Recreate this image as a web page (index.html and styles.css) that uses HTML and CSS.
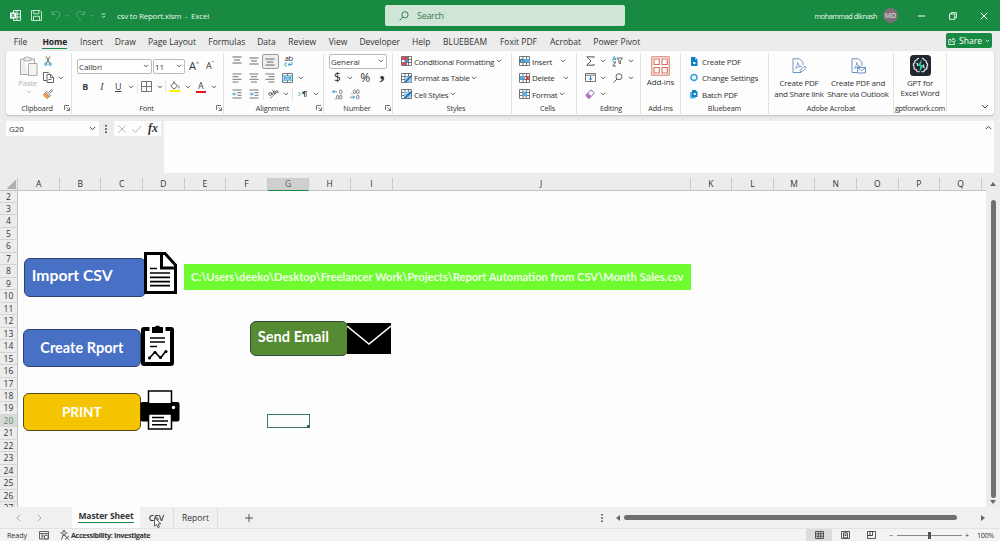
FILE: index.html
```html
<!doctype html>
<html lang="en">
<head>
	<meta charset="UTF-8">
	<title>csv to Report.xlsm - Excel</title>
	<link rel="stylesheet" href="styles.css">
</head>
<body>
	<!-- icons used more than once -->
	<svg class="defs">
		<symbol id="chev" viewBox="0 0 6 4"><path d="M1 .8 3 2.8 5 .8" fill="none" stroke="#444" stroke-width=".9"/></symbol>
		<symbol id="launch" viewBox="0 0 6 6"><path d="M.5 5V.5H5M2.3 2.3 5.3 5.3M5.5 2.5V5.5H2.5" fill="none" stroke="#555" stroke-width=".8"/></symbol>
		<symbol id="table" viewBox="0 0 11 10"><path d="M.5.5h10v9H.5zM.5 3.5h10M.5 6.5h10M4 .5v9M7.5.5v9" fill="#fff" stroke="#555" stroke-width=".8"/></symbol>
	</svg>

	<div id="frame">
		<header class="titlebar">
			<div class="quick">
				<svg width="11" height="11" viewBox="0 0 11 11"><path d="M3.5.5h7v10h-7zM7 .5v10M3.5 4h7M3.5 7h7" fill="none" stroke="#e5f5e9"/><path d="M0 2.5h6v6H0z" fill="#fff"/><path d="M1.7 3.8 4.3 7.2M4.3 3.8 1.7 7.2" stroke="#188a42"/></svg>
				<svg width="11" height="11" viewBox="0 0 11 11"><path d="M.5.5h8.5l1.5 1.5v8.5H.5zM2.8.5v3.3h5V.5M2.5 10.5V6.3h6v4.2" fill="none" stroke="#d8efdf" stroke-width=".9"/></svg>
				<svg width="20" height="11" viewBox="0 0 20 11"><path d="M1 1v3.5h3.5M1.2 4.2C3 .8 8.5.5 8.8 4 9 6.5 7 8 4.5 10M14.5 5l1.5 1.5 1.5-1.5" fill="none" stroke="#59ac75"/></svg>
				<svg width="20" height="11" viewBox="0 0 20 11"><path d="M8.5 1v3.5H5M8.3 4.2C6.5.8 1 .5.7 4 .5 6.5 2.5 8 5 10M14 5l1.5 1.5L17 5" fill="none" stroke="#59ac75"/></svg>
				<svg width="5" height="6" viewBox="0 0 5 6"><path d="M.5 1h4M1 3l1.5 1.5L4 3" fill="none" stroke="#d8efdf" stroke-width=".9"/></svg>
			</div>
			<span class="docname">csv to Report.xlsm&nbsp; -&nbsp; Excel</span>
			<div class="search">
				<svg width="10" height="10" viewBox="0 0 10 10"><circle cx="6" cy="3.8" r="3.1" fill="none" stroke="#3b7b54"/><path d="M3.8 6 .6 9.4" stroke="#3b7b54"/></svg>
				<span>Search</span>
			</div>
			<span class="user">mohammad diknash</span>
			<span class="avatar">MD</span>
			<div class="winbtns">
				<svg width="7" height="8" viewBox="0 0 7 8"><path d="M0 4h7" stroke="#fff"/></svg>
				<svg width="8" height="8" viewBox="0 0 8 8"><path d="M.5 2h5.3v5.3H.5zM2.2 2V.6h5.2v5H5.8" fill="none" stroke="#fff" stroke-width=".9"/></svg>
				<svg width="8" height="8" viewBox="0 0 8 8"><path d="M.8.8l6.4 6.4M7.2.8.8 7.2" stroke="#fff"/></svg>
			</div>
		</header>

		<div class="tabbar">
			<nav class="tabs">
				<a>File</a><a class="active">Home</a><a>Insert</a><a>Draw</a><a>Page Layout</a><a>Formulas</a><a>Data</a><a>Review</a><a>View</a><a>Developer</a><a>Help</a><a>BLUEBEAM</a><a>Foxit PDF</a><a>Acrobat</a><a>Power Pivot</a>
			</nav>
			<div class="share">
				<svg width="8" height="8" viewBox="0 0 8 8"><path d="M3 2.5H.8v5h5.7V5.5M2.5 5.5C2.7 3.5 3.7 2.7 5 2.7V1l2.5 2.5L5 5.5V4" fill="none" stroke="#fff" stroke-width=".8"/></svg>
				<span>Share</span>
				<svg width="5" height="4" viewBox="0 0 6 4"><path d="M1 .8 3 2.8 5 .8" fill="none" stroke="#fff"/></svg>
			</div>
		</div>

		<div class="ribbon">
			<section class="group clipboard">
				<div class="body">
					<div class="paste">
						<svg width="20" height="21" viewBox="0 0 20 21"><path d="M5 3H1.5v15.5H9M12 3h3.5v4M5 1.8h2C7.2.5 9.8.5 10 1.8h2v3H5z" fill="#eee" stroke="#aaa"/><path d="M9.5 7.5h8.5v12H9.5z" fill="#f4f4f4" stroke="#aaa"/></svg>
						<span>Paste</span>
						<svg class="faint" width="6" height="4"><use href="#chev"/></svg>
					</div>
					<div class="lines">
						<div class="line"><span class="b"><svg width="8" height="10" viewBox="0 0 8 10"><path d="M2 .5 5.5 7M6 .5 2.5 7" stroke="#555" stroke-width=".9"/><circle cx="1.8" cy="8.2" r="1.2" fill="none" stroke="#2e8fc0"/><circle cx="6.2" cy="8.2" r="1.2" fill="none" stroke="#2e8fc0"/></svg></span></div>
						<div class="line"><span class="b"><svg width="11" height="11" viewBox="0 0 11 11"><path d="M4 8.5H.5v-8h5l1 1" fill="none" stroke="#555" stroke-width=".9"/><path d="M4 2.5h3.8l2.7 2.7v5.3H4zM7.5 2.5v3h3M5.5 7.5h3" fill="#fff" stroke="#555" stroke-width=".9"/></svg></span><span class="c"><svg><use href="#chev"/></svg></span></div>
						<div class="line"><span class="b"><svg width="10" height="10" viewBox="0 0 10 10"><path d="M6 3.2 8.5.7l1 1L7 4.2" fill="#fff" stroke="#555" stroke-width=".8"/><path d="M3.8 2.5 7.6 6.3 6.4 7.5 2.5 3.7z" fill="#fff" stroke="#555" stroke-width=".8"/><path d="M2.4 3.8 6.3 7.6 4.5 9.5C3 9 1.5 7.5.5 5.5z" fill="#f1a24a" stroke="#b8651c" stroke-width=".6"/></svg></span></div>
					</div>
				</div>
				<footer><span>Clipboard</span><svg class="launch"><use href="#launch"/></svg></footer>
			</section>

			<section class="group font">
				<div class="body lines">
					<div class="line">
						<span class="combo fontname">Calibri<svg class="ch"><use href="#chev"/></svg></span>
						<span class="combo fontsize">11<svg class="ch"><use href="#chev"/></svg></span>
						<span class="grow big">A<sup>^</sup></span>
						<span class="grow">A<sup>ˇ</sup></span>
					</div>
					<div class="line second">
						<span class="b"><b>B</b></span><span class="b"><i>I</i></span><span class="b"><u>U</u></span><span class="c"><svg><use href="#chev"/></svg></span>
						<span class="sep"></span>
						<span class="b"><svg width="11" height="11" viewBox="0 0 11 11"><path d="M.5.5h10v10H.5zM.5 5.5h10M5.5.5v10" fill="none" stroke="#666" stroke-width=".9"/></svg></span><span class="c"><svg><use href="#chev"/></svg></span>
						<span class="sep"></span>
						<span class="b"><svg width="12" height="11" viewBox="0 0 12 11"><path d="M5 1.5 8.5 5 5 8 1.8 5z" fill="#fff" stroke="#555" stroke-width=".9"/><path d="M5 0v3" stroke="#555" stroke-width=".8"/><path d="M9 4.5q1.6 1 1 3" fill="none" stroke="#2e8fc0"/><path d="M.5 9h11v2H.5z" fill="#fff200"/></svg></span><span class="c"><svg><use href="#chev"/></svg></span>
						<span class="b fontcolor">A</span><span class="c"><svg><use href="#chev"/></svg></span>
					</div>
				</div>
				<footer><span>Font</span><svg class="launch"><use href="#launch"/></svg></footer>
			</section>

			<section class="group align">
				<div class="body lines">
					<div class="line">
						<span class="b"><svg width="10" height="10" viewBox="0 0 10 10"><path d="M.5 1h9M2 4h6M.5 7h9" stroke="#666"/></svg></span>
						<span class="b"><svg width="10" height="10" viewBox="0 0 10 10"><path d="M.5 2h9M2 5h6M.5 8h9" stroke="#666"/></svg></span>
						<span class="b on"><svg width="10" height="10" viewBox="0 0 10 10"><path d="M.5 3h9M2 6h6M.5 9h9" stroke="#666"/></svg></span>
						<span class="b wrap"><span>ab</span><svg width="9" height="5" viewBox="0 0 9 5"><path d="M3 .8Q.8.8.8 2.5T3 4.2M8 0v2.5H4.5M6 .8 4.3 2.5 6 4.2" fill="none" stroke="#2e8fc0" stroke-width=".9"/></svg></span>
					</div>
					<div class="line">
						<span class="b"><svg width="10" height="10" viewBox="0 0 10 10"><path d="M.5 1h9M.5 3.7h6M.5 6.3h9M.5 9h6" stroke="#666" stroke-width=".9"/></svg></span>
						<span class="b"><svg width="10" height="10" viewBox="0 0 10 10"><path d="M.5 1h9M2 3.7h6M.5 6.3h9M2 9h6" stroke="#666" stroke-width=".9"/></svg></span>
						<span class="b"><svg width="10" height="10" viewBox="0 0 10 10"><path d="M.5 1h9M3.5 3.7h6M.5 6.3h9M3.5 9h6" stroke="#666" stroke-width=".9"/></svg></span>
						<span class="b"><svg width="11" height="10" viewBox="0 0 11 10"><path d="M.5.5h10v9H.5zM5.5.5v9" fill="#fff" stroke="#555" stroke-width=".8"/><path d="M.5 2.8h10v4.4H.5z" fill="#bfe3f5" stroke="#2e8fc0" stroke-width=".8"/><path d="M2 5h7M3.5 3.8 2.2 5l1.3 1.2M7.5 3.8 8.8 5 7.5 6.2" fill="none" stroke="#1c6fa5" stroke-width=".7"/></svg></span><span class="c"><svg><use href="#chev"/></svg></span>
					</div>
					<div class="line">
						<span class="b"><svg width="10" height="10" viewBox="0 0 10 10"><path d="M.5 1h9M5.5 3.7h4M5.5 6.3h4M.5 9h9" stroke="#666" stroke-width=".9"/><path d="M4.5 5H.8M2.3 3.5.8 5l1.5 1.5" fill="none" stroke="#2e8fc0" stroke-width=".9"/></svg></span>
						<span class="b"><svg width="10" height="10" viewBox="0 0 10 10"><path d="M.5 1h9M5.5 3.7h4M5.5 6.3h4M.5 9h9" stroke="#666" stroke-width=".9"/><path d="M.5 5h3.7M2.7 3.5 4.2 5 2.7 6.5" fill="none" stroke="#2e8fc0" stroke-width=".9"/></svg></span>
						<span class="sep thin"></span>
						<span class="b"><svg width="11" height="10" viewBox="0 0 11 10"><path d="M2 9.5 10 2M7.5 2H10v2.5" fill="none" stroke="#777" stroke-width=".9"/><circle cx="2.2" cy="5" r="1.4" fill="none" stroke="#555" stroke-width=".9"/><path d="M3.6 3.5 4.6 6M4.5 1 7 5" stroke="#555" stroke-width=".9"/><circle cx="6.5" cy="3.4" r="1.2" fill="none" stroke="#555" stroke-width=".9"/></svg></span><span class="c"><svg><use href="#chev"/></svg></span>
						<span class="sep"></span>
						<span class="b rtl"><svg width="9" height="8" viewBox="0 0 9 8"><path d="M.5 2 2.5 4 .5 6" fill="none" stroke="#2a9a8a" stroke-width=".9"/><path d="M6.5 7V1.5M8.2 7V1.5M9 1.5H6" fill="none" stroke="#444" stroke-width=".8"/><circle cx="5.5" cy="2.8" r="1.4" fill="#444"/></svg></span><span class="c"><svg><use href="#chev"/></svg></span>
					</div>
				</div>
				<footer><span>Alignment</span><svg class="launch"><use href="#launch"/></svg></footer>
			</section>

			<section class="group number">
				<div class="body lines">
					<div class="line"><span class="combo format">General<svg class="ch"><use href="#chev"/></svg></span></div>
					<div class="line signs"><span class="b">$</span><span class="c"><svg><use href="#chev"/></svg></span><span class="b pct">%</span><span class="b comma">,</span></div>
					<div class="line decs">
						<span class="b"><svg width="11" height="11" viewBox="0 0 11 11"><path d="M5 2.7H.6M2.200 1.100.6 2.700l1.600 1.600" fill="none" stroke="#2e8fc0" stroke-width=".9"/><g fill="none" stroke="#666" stroke-width=".8"><ellipse cx="8.800" cy="2.700" rx="1.300" ry="1.900"/><ellipse cx="5.600" cy="8.200" rx="1.300" ry="1.900"/><ellipse cx="8.800" cy="8.200" rx="1.300" ry="1.900"/><path d="M2.500 10.200h1"/></g></svg></span>
						<span class="b"><svg width="11" height="11" viewBox="0 0 11 11"><path d="M1 8.200h4.600M4 6.600l1.600 1.600L4 9.800" fill="none" stroke="#2e8fc0" stroke-width=".9"/><g fill="none" stroke="#666" stroke-width=".8"><ellipse cx="5.600" cy="2.700" rx="1.300" ry="1.900"/><ellipse cx="8.800" cy="2.700" rx="1.300" ry="1.900"/><ellipse cx="8.800" cy="8.200" rx="1.300" ry="1.900"/><path d="M2.500 4.700h1"/></g></svg></span>
					</div>
				</div>
				<footer><span>Number</span><svg class="launch"><use href="#launch"/></svg></footer>
			</section>

			<section class="group styles">
				<div class="body lines">
					<div class="line"><svg class="ti"><use href="#table"/><path d="M1 1h6v2.5H1zM1 6.5h5V9H1z" fill="#e2475d"/><path d="M4 3.5h3v3H4z" fill="#4a90d0"/></svg><span>Conditional Formatting</span><svg class="ch"><use href="#chev"/></svg></div>
					<div class="line"><svg class="ti"><use href="#table"/><path d="M4 3.5h6.5v6H4z" fill="#9ccbed"/><path d="M4 9.5 10 3" stroke="#1f6fb0" stroke-width="1.8"/></svg><span>Format as Table</span><svg class="ch"><use href="#chev"/></svg></div>
					<div class="line"><svg class="ti"><use href="#table"/><path d="M3 2.5h7v6H3z" fill="#9ccbed"/><path d="M3.5 9.5 10 3" stroke="#1f6fb0" stroke-width="1.8"/></svg><span>Cell Styles</span><svg class="ch"><use href="#chev"/></svg></div>
				</div>
				<footer><span>Styles</span></footer>
			</section>

			<section class="group cells">
				<div class="body lines">
					<div class="line"><svg class="ti"><use href="#table"/><path d="M4 3h7v3.5H4z" fill="#56aede"/><path d="M5 4.8H.5M2.5 3 .7 4.8l1.8 1.8" fill="none" stroke="#1f6fb0"/></svg><span>Insert</span><svg class="ch far"><use href="#chev"/></svg></div>
					<div class="line"><svg class="ti"><use href="#table"/><path d="M1 3h5v3.5H1z" fill="#56aede"/><path d="M6.5 3 10.5 7M10.5 3l-4 4" stroke="#d83b3b" stroke-width="1.1"/></svg><span>Delete</span><svg class="ch far"><use href="#chev"/></svg></div>
					<div class="line"><svg class="ti"><use href="#table"/><path d="M3.5 2.5h4.5v5H3.5z" fill="#56aede"/></svg><span>Format</span><svg class="ch"><use href="#chev"/></svg></div>
				</div>
				<footer><span>Cells</span></footer>
			</section>

			<section class="group editing">
				<div class="body lines">
					<div class="line"><span class="b"><svg width="9" height="10" viewBox="0 0 9 10"><path d="M8 2V.8H.8L5 5 .8 9.2H8V8" fill="none" stroke="#555"/></svg></span><span class="c"><svg><use href="#chev"/></svg></span><span class="b az"><svg width="11" height="11" viewBox="0 0 11 11"><path d="M.5 4.5 2.2.5 4 4.5M1 3.3h2.5" fill="none" stroke="#2e8fc0" stroke-width=".9"/><path d="M.8 6h3L.8 10h3.2M5 2h5.5L8.3 4.7V8L7 7V4.7z" fill="none" stroke="#555" stroke-width=".9"/></svg></span><span class="c"><svg><use href="#chev"/></svg></span></div>
					<div class="line"><span class="b"><svg width="11" height="9" viewBox="0 0 11 9"><path d="M.5.5h10v8H.5zM.5 2.2h10" fill="none" stroke="#666" stroke-width=".9"/><path d="M5.5 3v4M3.8 5.4 5.5 7l1.7-1.6" fill="none" stroke="#1f6fb0" stroke-width=".9"/></svg></span><span class="c"><svg><use href="#chev"/></svg></span><span class="b az"><svg width="10" height="10" viewBox="0 0 10 10"><circle cx="6" cy="3.7" r="3" fill="none" stroke="#555" stroke-width=".9"/><path d="M4 6 .6 9.5" stroke="#555"/></svg></span><span class="c"><svg><use href="#chev"/></svg></span></div>
					<div class="line"><span class="b"><svg width="10" height="10" viewBox="0 0 10 10"><path d="M.8 6 6 .8 9.3 4 4.5 9.2H3z" fill="#fff" stroke="#8c4fa5" stroke-width=".9"/><path d="M.8 6 3 3.8 6.5 7.2 4.5 9.2H3z" fill="#b673cc"/></svg></span><span class="c"><svg><use href="#chev"/></svg></span></div>
				</div>
				<footer><span>Editing</span></footer>
			</section>

			<section class="group addins">
				<div class="body tall">
					<svg width="19" height="20" viewBox="0 0 19 20"><path d="M.8.8h17.400v18.400H.8z" fill="#fff" stroke="#d6705c"/><path d="M3 3h5.3v5.5H3zM11 3h5.3v5.5H11zM3 11.5h5.3V17H3zM11 11.5h5.3V17H11z" fill="#fff" stroke="#d6705c" stroke-width="1.1"/></svg>
					<p>Add-ins</p>
				</div>
				<footer><span>Add-ins</span></footer>
			</section>

			<section class="group bluebeam">
				<div class="body lines">
					<div class="line"><svg width="8" height="9" viewBox="0 0 8 9"><path d="M1 0h4l2.5 2.5V9H1z" fill="#0f80c0"/><path d="M5 0v2.5h2.5z" fill="#8cc9ea"/><path d="M3 7V5h2.5v2z" fill="#cfeafa"/></svg><span>Create PDF</span></div>
					<div class="line"><svg width="8" height="9" viewBox="0 0 8 9"><circle cx="4" cy="4.5" r="2.9" fill="#eaf7fe" stroke="#2799d2" stroke-width="1.1"/><circle cx="4" cy="4.5" r="3.6" fill="none" stroke="#2799d2" stroke-width=".7" stroke-dasharray="1 1"/></svg><span>Change Settings</span></div>
					<div class="line"><svg width="8" height="9" viewBox="0 0 8 9"><path d="M0 2v6.500h5.500V2z" fill="#57b2de"/><path d="M2 0h3.500l2 2v5H2z" fill="#0f80c0"/><path d="M3.500 3h2.500v2H3.500z" fill="#cfeafa"/></svg><span>Batch PDF</span></div>
				</div>
				<footer><span>Bluebeam</span></footer>
			</section>

			<section class="group acrobat">
				<div class="body">
					<div class="tall link">
						<svg width="15" height="16" viewBox="0 0 15 16"><path d="M9 14.5H1V.8h6.500L11 4.300V7" fill="none" stroke="#6f93c0"/><path d="M3.500 10.500Q6 7 5.700 4.500 6 8 9.500 8.500 6 8.300 3.500 10.500z" fill="none" stroke="#6f93c0" stroke-width=".8"/><path d="M8 12.500l4-4q2-.7 2 1.300l-4 4q-2 .7-2-1.300z" fill="#fff" stroke="#6f93c0"/></svg>
						<p>Create PDF<br>and Share link</p>
					</div>
					<div class="tall mail">
						<svg width="15" height="16" viewBox="0 0 15 16"><path d="M6 14.500H1V.8h6.500L11 4.300V8" fill="none" stroke="#6f93c0"/><path d="M3.500 10.500Q6 7 5.700 4.500 6 8 9.500 8.500 6 8.300 3.500 10.500z" fill="none" stroke="#6f93c0" stroke-width=".8"/><path d="M6.500 9.500h8v5.500h-8zM6.500 9.700l4 3 4-3" fill="#fff" stroke="#5b86bd" stroke-width=".9"/></svg>
						<p>Create PDF and<br>Share via Outlook</p>
					</div>
				</div>
				<footer><span>Adobe Acrobat</span></footer>
			</section>

			<section class="group gpt">
				<div class="body tall">
					<svg width="21" height="21" viewBox="0 0 21 21"><rect width="21" height="21" rx="3.5" fill="#22262f"/><path d="M9 3.500Q7.500 3 6.800 5 4.500 5 4.700 7.500 2.500 9 4 11.500 3.500 14 6 14.500 7 17.500 9.500 16.500M12 3.500Q13.500 3 14.200 5 16.500 5 16.300 7.500 18.500 9 17 11.500 17.500 14 15 14.500 14 17.500 11.500 16.500M6.500 8Q8 8.500 7.500 11M14.500 13Q13 12 13.700 9.500" fill="none" stroke="#e6e9ec" stroke-width="1.2"/><path d="M11.800 4 7.500 11h2.700L9.300 17.500 13.800 10h-3z" fill="#22d3a0"/></svg>
					<p>GPT for<br>Excel Word</p>
				</div>
				<footer><span>gptforwork.com</span></footer>
			</section>
			<svg class="collapse" width="8" height="5" viewBox="0 0 8 5"><path d="M1 1l3 3 3-3" fill="none" stroke="#444"/></svg>
		</div>

		<div class="formulabar">
			<div class="namebox">G20<svg width="7" height="5" viewBox="0 0 7 5"><path d="M.8 1l2.7 2.7L6.2 1" fill="none" stroke="#444"/></svg></div>
			<svg class="dots" width="2" height="8" viewBox="0 0 2 8"><path d="M0 0h2v1.600H0zM0 3.200h2v1.600H0zM0 6.400h2V8H0z" fill="#555"/></svg>
			<div class="fx">
				<svg width="8" height="8" viewBox="0 0 8 8"><path d="M.5.5l7 7M7.500.5l-7 7" stroke="#b5b5b5"/></svg>
				<svg width="10" height="8" viewBox="0 0 10 8"><path d="M.5 4.500 3.500 7.300 9.500.7" fill="none" stroke="#b5b5b5"/></svg>
				<i>fx</i>
			</div>
			<div class="input"><svg width="7" height="5" viewBox="0 0 7 5"><path d="M.8 4l2.700-2.700L6.200 4" fill="none" stroke="#444"/></svg></div>
		</div>

		<div class="workbook">
			<div class="sheet">
				<div class="cols">
					<span class="corner"></span><span>A</span><span>B</span><span>C</span><span>D</span><span>E</span><span>F</span><span class="sel">G</span><span>H</span><span>I</span><span>J</span><span>K</span><span>L</span><span>M</span><span>N</span><span>O</span><span>P</span><span>Q</span>
				</div>
				<div class="main">
					<div class="rows">
						<span>2</span><span>3</span><span>4</span><span>5</span><span>6</span><span>7</span><span>8</span><span>9</span><span>10</span><span>11</span><span>12</span><span>13</span><span>14</span><span>15</span><span>16</span><span>17</span><span>18</span><span>19</span><span class="sel">20</span><span>21</span><span>22</span><span>23</span><span>24</span><span>25</span><span>26</span><span>27</span>
					</div>
					<!-- buttons and pictures float over the cells -->
					<div class="canvas">
						<div class="shape import"><span>Import CSV</span></div>
						<svg class="pic doc" width="33" height="42" viewBox="0 0 33 42"><path d="M1.500 1.500h19.500L31.500 13v27.500h-30z" fill="#fff" stroke="#000" stroke-width="3"/><path d="M17.500 1v15H32" fill="none" stroke="#000" stroke-width="3"/><path d="M6 16.500h7M6 21h20M6 25.300h20M6 29.600h20M6 33.700h20" stroke="#000" stroke-width="1.700"/></svg>
						<div class="path"><span>C:\Users\deeko\Desktop\Freelancer Work\Projects\Report Automation from CSV\Month Sales.csv</span></div>

						<div class="shape create"><span>Create Rport</span></div>
						<svg class="pic clip" width="33" height="41" viewBox="0 0 33 41"><rect x="2" y="4" width="29" height="35" rx="1" fill="#fff" stroke="#000" stroke-width="4"/><path d="M8.500 1h16v9h-16z" fill="#fff"/><path d="M11 2h2.500Q16.500-1 19.500 2H22v6H11z" fill="#000"/><path d="M9 13h15M9 17h15M9 21.500h7" stroke="#000" stroke-width="1.600"/><path d="M8.500 33 14 27l5.500 6L25 26" fill="none" stroke="#000" stroke-width="1.600"/><g><circle cx="8.500" cy="33" r="1.500"/><circle cx="14" cy="27.500" r="1.500"/><circle cx="19.500" cy="32.500" r="1.500"/><circle cx="25" cy="26.500" r="1.500"/></g></svg>

						<div class="shape send"><span>Send Email</span></div>
						<svg class="pic envelope" width="44" height="31" viewBox="0 0 44 31"><path d="M0 0h44v31H0z"/><path d="M0 3 22 21 44 3" fill="none" stroke="#fff" stroke-width="1.600"/></svg>

						<div class="shape print"><span>PRINT</span></div>
						<svg class="pic printer" width="40" height="40" viewBox="0 0 40 40"><path d="M8.500 1h23v14h-23z" fill="#fff" stroke="#000" stroke-width="1.500"/><path d="M2.500 12H8v1h24v-1h5.500q2 0 2 2v15.500q0 2-2 2h-35q-2 0-2-2V14q0-2 2-2z"/><circle cx="33.500" cy="17.500" r="1.700" fill="#fff"/><path d="M8.500 24h23v15h-23z" fill="#fff" stroke="#000" stroke-width="1.500"/><path d="M12 27.500h12M12 31h16M12 34.700h15" stroke="#000" stroke-width="1.500"/></svg>
						<div class="cursorcell"></div>
					</div>
				</div>
			</div>
			<div class="vscroll"><i class="up"></i><b></b><i class="down"></i></div>
		</div>

		<div class="sheettabs">
			<svg width="5" height="8" viewBox="0 0 5 8"><path d="M4.200.8.9 4l3.300 3.200" fill="none" stroke="#aaa"/></svg>
			<svg width="5" height="8" viewBox="0 0 5 8"><path d="M.8.8 4.100 4 .8 7.200" fill="none" stroke="#aaa"/></svg>
			<span class="tab active"><b>Master Sheet</b></span>
			<span class="tab csv">CSV
				<svg class="pointer" width="8" height="12" viewBox="0 0 8 12"><path d="M.6.8v8.400l2-1.800 1.300 3.200 1.500-.6-1.300-3.100h2.700z" fill="#fff" stroke="#333" stroke-width=".8"/></svg>
			</span>
			<span class="tab rep">Report</span>
			<svg class="plus" width="8" height="8" viewBox="0 0 8 8"><path d="M4 0v8M0 4h8" stroke="#555"/></svg>
			<svg class="dots" width="2" height="8" viewBox="0 0 2 8"><path d="M0 0h2v1.600H0zM0 3.200h2v1.600H0zM0 6.400h2V8H0z" fill="#666"/></svg>
			<div class="hscroll"><i class="left"></i><b></b><i class="right"></i></div>
		</div>

		<div class="status">
			<span class="ready">Ready</span>
			<svg class="macro" width="10" height="9" viewBox="0 0 10 9"><path d="M.5.500h9v7.500h-9zM.5 2.500h9M3 2.500V8M3 5h3" fill="none" stroke="#555" stroke-width=".9"/><circle cx="7.300" cy="6" r="2" fill="#fff" stroke="#444" stroke-width=".9"/></svg>
			<svg class="acc" width="10" height="10" viewBox="0 0 10 10"><circle cx="4" cy="1.300" r="1" fill="none" stroke="#444" stroke-width=".8"/><path d="M.5 2.500 3 3.500v2L1.500 9.500M7.500 2.500 5 3.500v2M3 5.500h2M5 5.800 9 9.500M9 5.800 5 9.500" fill="none" stroke="#444" stroke-width=".9"/></svg>
			<b>Accessibility: Investigate</b>
			<div class="views">
				<span class="current"><svg width="9" height="8" viewBox="0 0 9 8"><path d="M.5.5h8v7h-8zM.5 2.800h8M.5 5.200h8M3.200.5v7M5.800.5v7" fill="none" stroke="#444" stroke-width=".9"/></svg></span>
				<span><svg width="9" height="8" viewBox="0 0 9 8"><path d="M.5.5h8v7h-8zM2.500 1.800h4v5h-4zM3.500 3.200h2M3.500 4.500h2" fill="none" stroke="#444" stroke-width=".9"/></svg></span>
				<span><svg width="9" height="8" viewBox="0 0 9 8"><path d="M.5.5h8v7h-8zM3 .5v4H.5M5.500.5v4h-2.500M.5 4.500h5" fill="none" stroke="#444" stroke-width=".9"/></svg></span>
			</div>
			<div class="zoom"><span>−</span><div class="track"><b></b></div><span>+</span></div>
			<span class="percent">100%</span>
		</div>
	</div>
</body>
</html>
```
FILE: styles.css
```css
* {
	box-sizing: border-box;
}

body {
	margin: 0;
	font: 8px "Open Sans", "Noto Sans", sans-serif;
	color: #333;
	background: #ececec;
}

svg {
	display: block;
	flex: none;
}

.defs {
	position: absolute;
	width: 0;
	height: 0;
}

#frame {
	width: 1000px;
	height: 541px;
	display: flex;
	flex-direction: column;
	overflow: hidden;
	white-space: nowrap;
}

/* title bar */
.titlebar {
	height: 31px;
	flex: none;
	background: #188a42;
	color: #e8f5ec;
	display: flex;
	align-items: center;
}
.quick {
	width: 117px;
	padding-left: 10px;
	display: flex;
	align-items: center;
	gap: 9.5px;
}
.quick svg:nth-child(4) { margin-left: -5px; }
.quick svg:nth-child(5) { margin-left: -4px; }
.docname {
	width: 268px;
	letter-spacing: -.22px;
}
.search {
	width: 240px;
	height: 21px;
	padding-left: 14px;
	display: flex;
	align-items: center;
	gap: 8px;
	background: #cfe6d7;
	border-radius: 2px;
	color: #3b7b54;
	font-size: 9px;
	letter-spacing: -.3px;
}
.user {
	width: 258px;
	padding-right: 6px;
	text-align: right;
	font-size: 7.3px;
	letter-spacing: -.48px;
}
.avatar {
	width: 15px;
	height: 15px;
	border-radius: 50%;
	background: #7d7074;
	font-size: 7px;
	line-height: 15px;
	text-align: center;
}
.winbtns {
	display: flex;
	align-items: center;
	gap: 23.5px;
	margin-left: 20px;
}

/* ribbon tabs */
.tabbar {
	height: 20px;
	flex: none;
	display: flex;
	justify-content: space-between;
	padding: 0 8px 0 5.5px;
}
.tabs {
	display: grid;
	grid-template-columns: 30px 38.5px 35px 32.5px 61px 48.5px 31px 40.5px 31px 52.5px 30.5px 57px 50px 44px 58.5px;
	justify-items: center;
	font-size: 8.5px;
	line-height: 21px;
}
.tabs a.active {
	height: 18px;
	font-weight: bold;
	color: #222;
	letter-spacing: -.15px;
	border-bottom: 1.5px solid #188a42;
}
.share {
	width: 46px;
	height: 15px;
	margin-top: 2px;
	display: flex;
	align-items: center;
	justify-content: center;
	gap: 3px;
	background: #188a42;
	border-radius: 2px;
	color: #fff;
	font-size: 8.5px;
}

/* ribbon */
.ribbon {
	height: 64px;
	flex: none;
	margin: 0 6px;
	display: flex;
	background: #fdfdfd;
	border-radius: 4px;
	box-shadow: 0 1px 2px #bbb;
	letter-spacing: -.26px;
}
.group {
	height: 61px;
	margin-top: 2px;
	flex: none;
	display: flex;
	flex-direction: column;
	border-right: 1px solid #e2e2e2;
}
.group .body {
	height: 49.5px;
	flex: none;
	display: flex;
}
.group .lines {
	display: flex;
	flex-direction: column;
}
.group footer {
	display: flex;
	align-items: center;
	justify-content: center;
	height: 13px;
	font-size: 7.3px;
	letter-spacing: -.15px;
}
.group footer span {
	flex: 1;
	text-align: center;
}
.launch {
	width: 6px;
	height: 6px;
	margin-right: 1px;
}
.line {
	height: 16.5px;
	display: flex;
	align-items: center;
}
.b {
	width: 16.5px;
	height: 15px;
	flex: none;
	display: flex;
	align-items: center;
	justify-content: center;
}
.c {
	width: 9px;
	flex: none;
	display: flex;
	justify-content: center;
}
.c svg, .ch {
	width: 6px;
	height: 4px;
}
.sep {
	width: 1px;
	height: 12px;
	margin: 0 1px;
	background: #e4e4e4;
}
.tall {
	flex-direction: column;
	align-items: center;
	text-align: center;
}
.tall p {
	margin: 0;
	line-height: 10.5px;
}
.combo {
	height: 15px;
	padding: 0 2px 0 1px;
	display: flex;
	align-items: center;
	justify-content: space-between;
	border: 1px solid #bbb;
	border-radius: 2px;
	background: #fff;
	letter-spacing: -.1px;
}

.clipboard { width: 66px; padding-left: 11px; }
.clipboard footer { margin-left: -7px; }
.paste {
	width: 24px;
	padding-top: 3px;
	display: flex;
	flex-direction: column;
	align-items: center;
	color: #b5b5b5;
}
.paste span { line-height: 11px; margin: 0 0 2px -3px; }
.faint { opacity: .4; }
.clipboard .lines { margin-left: -1px; }
.clipboard .b { width: 16px; }

.font { width: 152px; padding-left: 5px; }
.fontname { width: 75px; margin-right: 1px; }
.fontsize { width: 32px; margin-right: 4px; }
.font .lines { gap: 2px; padding-top: 5px; }
.grow { width: 17px; font-size: 9px; line-height: 12px; }
.grow.big { font-size: 11px; }
.grow sup { font-size: 6px; line-height: 0; }
.second { height: 20px; }
.second .b { font-size: 9px; color: #444; }
.second .b i { font-family: "Liberation Serif", serif; font-size: 10px; }
.fontcolor { height: 12px; line-height: 9px; position: relative; align-items: flex-start; }
.fontcolor::after {
	content: "";
	position: absolute;
	left: 3px;
	bottom: 0;
	width: 10px;
	height: 2px;
	background: #e81123;
}

.align { width: 100px; padding-left: 5px; }
.on { background: #eee; border: 1px solid #999; border-radius: 2px; }
.wrap { flex-direction: column; line-height: 7px; font-size: 7.5px; margin-left: 2px; }
.align .line:nth-child(2) .b:nth-child(4) { margin-left: 1px; }
.align .thin { margin: 0 1px; }
.rtl { margin-left: 1px; }

.number { width: 69px; padding-left: 5px; }
.format { width: 58px; }
.signs .b { font-size: 12px; }
.signs .pct { width: 21px; font-size: 12px; }
.signs .comma { width: 13px; font: bold 21px "Liberation Serif", serif; padding-bottom: 11px; }
.decs .b { margin-right: 1px; }

.styles { width: 119px; padding-left: 8px; }
.ti { width: 11px; height: 10px; margin-right: 2px; }
.line .ch { margin-left: 1.5px; }
.line .combo .ch { margin-left: 0; }
.cells { width: 65px; padding-left: 7px; }
.cells .line .far { margin-left: 8px; }
.editing { width: 64px; padding-left: 5px; }
.editing .az { margin-left: 2px; }
.addins { width: 40px; }
.addins .body { padding-top: 3px; letter-spacing: -.1px; }
.addins p { margin-top: 1px; }
.bluebeam { width: 88px; padding-left: 9px; }
.bluebeam .line span { margin-left: 4px; }
.bluebeam footer { margin-left: -9px; }
.acrobat { width: 125px; }
.acrobat .tall { display: flex; padding-top: 5px; }
.acrobat p { margin-top: 4px; }
.link { width: 60px; }
.mail { width: 58px; }
.gpt { width: 53px; border-right-color: #e8e8e8; }
.gpt .body { padding-top: 1.5px; }
.gpt p { margin-top: 2px; }
.gpt footer { letter-spacing: -.3px; }
.collapse { margin: 53px 0 0 34px; }

/* formula bar */
.formulabar {
	height: 63px;
	flex: none;
	padding: 6px 6px 0;
	display: flex;
}
.namebox {
	width: 93px;
	height: 15px;
	padding: 0 3px;
	display: flex;
	align-items: center;
	justify-content: space-between;
	background: #fdfdfd;
	letter-spacing: -.1px;
}
.formulabar .dots { margin: 4px 7px 0 6px; }
.fx {
	width: 47px;
	height: 15px;
	padding-left: 4px;
	display: flex;
	align-items: center;
	gap: 6px;
	background: #fdfdfd;
}
.fx i { font: italic bold 12px "Liberation Serif", serif; }
.input {
	flex: 1;
	height: 52px;
	margin-left: 3px;
	padding: 4px 2px;
	display: flex;
	justify-content: flex-end;
	background: #fdfdfd;
}

/* grid */
.workbook {
	height: 329px;
	flex: none;
	display: flex;
}
.sheet {
	width: 986px;
	height: 329px;
	overflow: hidden;
}
.cols {
	display: grid;
	grid-template-columns: 18.3px repeat(9, 41.6px) 298px repeat(7, 41.6px);
	height: 12.5px;
	border-bottom: 1px solid #c4c4c4;
	font-size: 8.5px;
	line-height: 12px;
	text-align: center;
}
.cols span { border-right: 1px solid #c8c8c8; }
.cols .sel { background: #cfcfcf; border-bottom: 1.5px solid #188a42; color: #3d6b53; }
.corner { background: linear-gradient(135deg, transparent 50%, #b0b0b0 50%) 7px 2px / 9px 9px no-repeat; }
.main { display: flex; height: 317px; }
.rows {
	width: 17.8px;
	border-right: 1px solid #c4c4c4;
}
.rows span {
	display: block;
	height: 12.48px;
	border-bottom: 1px solid #d4d4d4;
	font-size: 8.5px;
	line-height: 12px;
	text-align: center;
}
.rows .sel { background: #d5dcd8; color: #5b8570; }
.canvas {
	position: relative;
	flex: 1;
	background: #fdfdfd;
}

/* floating shapes */
.shape {
	position: absolute;
	display: flex;
	align-items: center;
	border: 1.5px solid #2c4272;
	border-radius: 6px;
	background: #4870c4;
	color: #fff;
	font: bold 14.5px Lato, sans-serif;
}
.import { left: 6px; top: 67px; width: 122px; height: 39px; padding: 0 0 5px 7px; font-size: 15.7px; }
.create { left: 5px; top: 138px; width: 118px; height: 38px; justify-content: center; }
.print { left: 5px; top: 202px; width: 118px; height: 38px; justify-content: center; background: #f5c400; border-color: #55491e; font-size: 13.6px; }
.send { left: 232px; top: 130px; width: 98px; height: 35px; padding: 0 0 3px 7px; background: #548b33; border-color: #2d4a3a; font-size: 14.6px; }
.pic { position: absolute; }
.doc { left: 126px; top: 61px; }
.clip { left: 123px; top: 134px; }
.envelope { left: 329px; top: 132px; }
.printer { left: 122px; top: 199px; }
.path {
	position: absolute;
	left: 166px;
	top: 73.5px;
	width: 507px;
	height: 26px;
	background: #6efc30;
	color: #f2ffe9;
	font: bold 11.15px/26px Lato, sans-serif;
	text-align: center;
}
.cursorcell {
	position: absolute;
	left: 249px;
	top: 223px;
	width: 43px;
	height: 14px;
	border: 1px solid #3c7a58;
}
.cursorcell::after {
	content: "";
	position: absolute;
	right: -1px;
	bottom: -1px;
	width: 3px;
	height: 3px;
	background: #2b6b49;
}

/* scroll bars */
.vscroll {
	width: 14px;
	padding: 4px 0 3px;
	display: flex;
	flex-direction: column;
	align-items: center;
}
.vscroll b { flex: 1; width: 5px; margin: 14px 0 2px; border-radius: 3px; background: #707070; }
.up { border: 3px solid transparent; border-top: 0; border-bottom: 4px solid #666; }
.down { border: 3px solid transparent; border-bottom: 0; border-top: 4px solid #666; }
.left { border: 3px solid transparent; border-left: 0; border-right: 4px solid #666; }
.right { border: 3px solid transparent; border-right: 0; border-left: 4px solid #666; }

/* sheet tabs */
.sheettabs {
	height: 21px;
	flex: none;
	padding-left: 16px;
	display: flex;
	align-items: center;
	background: #f0f0f0;
	font-size: 8.5px;
}
.sheettabs svg:nth-child(2) { margin-left: 16px; }
.tab { height: 21px; line-height: 21px; text-align: center; }
.tab.active { width: 68px; margin-left: 30px; background: #fdfdfd; letter-spacing: -.08px; }
.tab.active b { display: inline-block; height: 16px; line-height: 17px; border-bottom: 1.5px solid #188a42; vertical-align: top; }
.csv { width: 34px; position: relative; border-right: 1px solid #ddd; font-weight: 600; }
.pointer { position: absolute; left: 14px; top: 10px; }
.rep { width: 44px; border-right: 1px solid #ddd; }
.plus { margin-left: 27px; }
.sheettabs .dots { margin-left: 348px; }
.hscroll {
	width: 371px;
	margin-left: 13px;
	display: flex;
	align-items: center;
}
.hscroll b { width: 333px; height: 5px; margin: 0 24px 0 4px; border-radius: 3px; background: #707070; }

/* status bar */
.status {
	height: 13px;
	flex: none;
	display: flex;
	align-items: center;
	border-top: 1px solid #e2e2e2;
	background: #f3f3f3;
	font-size: 7.2px;
	letter-spacing: -.1px;
}
.ready { width: 32px; padding-left: 7px; }
.macro { margin-left: 7px; }
.acc { margin: 0 1px 0 11px; }
.status > b { width: 735px; letter-spacing: -.35px; }
.views { display: flex; }
.views span { width: 26px; height: 13px; display: flex; align-items: center; justify-content: center; }
.views .current { background: #dcdcdc; }
.zoom { display: flex; align-items: center; gap: 3.5px; margin-left: 5px; }
.track { width: 65px; height: 1px; background: #888; display: flex; align-items: center; justify-content: center; }
.track b { width: 3px; height: 7px; background: #555; flex: none; }
.percent { margin-left: 8px; letter-spacing: -.4px; }
```
